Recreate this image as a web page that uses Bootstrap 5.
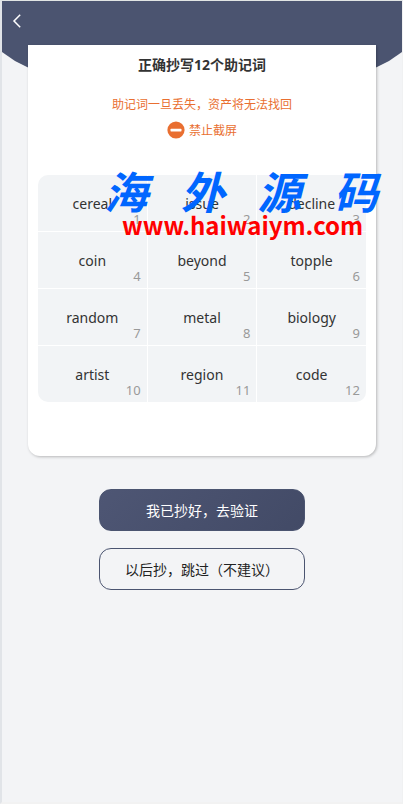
<!DOCTYPE html>
<html lang="zh-CN">
<head>
<meta charset="utf-8">
<meta name="viewport" content="width=device-width, initial-scale=1">
<title>助记词</title>
<link rel="stylesheet" href="https://cdn.jsdelivr.net/npm/bootstrap@5.3.0/dist/css/bootstrap.min.css">
<style>
body { background: #f3f4f6; font-family: "Noto Sans", "Noto Sans CJK SC", sans-serif; color: #333; }
.screen { border-top: 1px solid #e1e5e4; border-left: 2px solid #e1e4e8; border-right: 1px solid #f0f1f2; border-bottom: 2px solid #f2f2f2; }
.hero-bg { height: 92px; background: #4b5470; clip-path: polygon(0 0, 100% 0, 100% 51px, calc(100% - 13px) 60px, calc(100% - 27px) 67px, 50% 92px, 27px 67px, 13px 60px, 0 51px); }
.topbar { height: 44px; padding-left: 7px; padding-bottom: 4px; }
.back-btn { width: 16px; height: 24px; }
.phrase-card { margin: 0 26px; padding: 10px 10px 54px; border-radius: 0 0 12px 12px; box-shadow: 1px 1px 3px rgba(0,0,0,.25); }
.card-heading { font-size: 14px; line-height: 20px; color: #333; }
.warn { font-size: 12px; line-height: 18px; color: #e96f31; font-family: "Noto Sans CJK SC", sans-serif; }
.words { grid-template-columns: repeat(3, 1fr); gap: 1px; border-radius: 10px; margin-top: 36px; }
.word { height: 56px; background: #f2f4f6; font-size: 14px; line-height: 20px; padding-top: 19px; }
.num { right: 6px; bottom: 3px; font-size: 13px; line-height: 18px; color: #999; }
.actions { padding-top: 33px; gap: 17px; }
.action { width: 206px; height: 42px; border-radius: 12px; font-size: 14px; line-height: 20px; border: 1px solid #4b5470; color: #222; font-family: "Noto Sans CJK SC", sans-serif; }
.action.solid { background: linear-gradient(135deg, #4e5674, #424a66); color: #fff; }
.stamp { left: 92px; right: 8px; top: 164px; pointer-events: none; }
.stamp-name { font: italic 700 44px/50px "Noto Sans CJK SC", sans-serif; color: #06f; padding: 0 16px 0 10px; }
.stamp-url { font: 700 24px/30px "Noto Sans CJK SC", sans-serif; color: #f00; padding-left: 28px; margin-top: -5px; }
</style>
<script src="https://cdn.jsdelivr.net/npm/bootstrap@5.3.0/dist/js/bootstrap.bundle.min.js"></script>
</head>
<body>
<div class="screen position-relative min-vh-100">
  <div class="hero-bg position-absolute top-0 start-0 w-100"></div>
  <header class="topbar position-relative d-flex align-items-center">
    <button type="button" class="back-btn btn p-0 border-0 d-flex align-items-center justify-content-center" aria-label="返回">
      <svg width="10" height="14" viewBox="0 0 10 14" fill="none" stroke="#fff" stroke-width="1.5"><path d="M8.2 .8 2 7l6.200 6.200"/></svg>
    </button>
  </header>
  <main class="position-relative">
    <section class="phrase-card bg-white">
      <h1 class="card-heading text-center fw-bold mb-0">正确抄写12个助记词</h1>
      <p class="warn text-center mb-0 mt-3 pt-1">助记词一旦丢失，资产将无法找回</p>
      <p class="warn d-flex align-items-center justify-content-center mb-0 mt-2">
        <svg class="me-1" width="18" height="18" viewBox="0 0 18 18"><circle cx="9" cy="9" r="8.600" fill="#e96f31"/><rect x="3.500" y="7.800" width="11" height="2.600" rx=".6" fill="#fff"/></svg>
        <span>禁止截屏</span>
      </p>
      <div class="words d-grid overflow-hidden">
        <div class="word position-relative text-center">cereal<span class="num position-absolute">1</span></div>
        <div class="word position-relative text-center">issue<span class="num position-absolute">2</span></div>
        <div class="word position-relative text-center">decline<span class="num position-absolute">3</span></div>
        <div class="word position-relative text-center">coin<span class="num position-absolute">4</span></div>
        <div class="word position-relative text-center">beyond<span class="num position-absolute">5</span></div>
        <div class="word position-relative text-center">topple<span class="num position-absolute">6</span></div>
        <div class="word position-relative text-center">random<span class="num position-absolute">7</span></div>
        <div class="word position-relative text-center">metal<span class="num position-absolute">8</span></div>
        <div class="word position-relative text-center">biology<span class="num position-absolute">9</span></div>
        <div class="word position-relative text-center">artist<span class="num position-absolute">10</span></div>
        <div class="word position-relative text-center">region<span class="num position-absolute">11</span></div>
        <div class="word position-relative text-center">code<span class="num position-absolute">12</span></div>
      </div>
    </section>
    <div class="actions d-flex flex-column align-items-center">
      <button type="button" class="action solid btn p-0">我已抄好，去验证</button>
      <button type="button" class="action btn p-0">以后抄，跳过（不建议）</button>
    </div>
  </main>
  <div class="stamp position-absolute">
    <div class="stamp-name d-flex justify-content-between"><span>海</span><span>外</span><span>源</span><span>码</span></div>
    <div class="stamp-url">www.haiwaiym.com</div>
  </div>
</div>
</body>
</html>
